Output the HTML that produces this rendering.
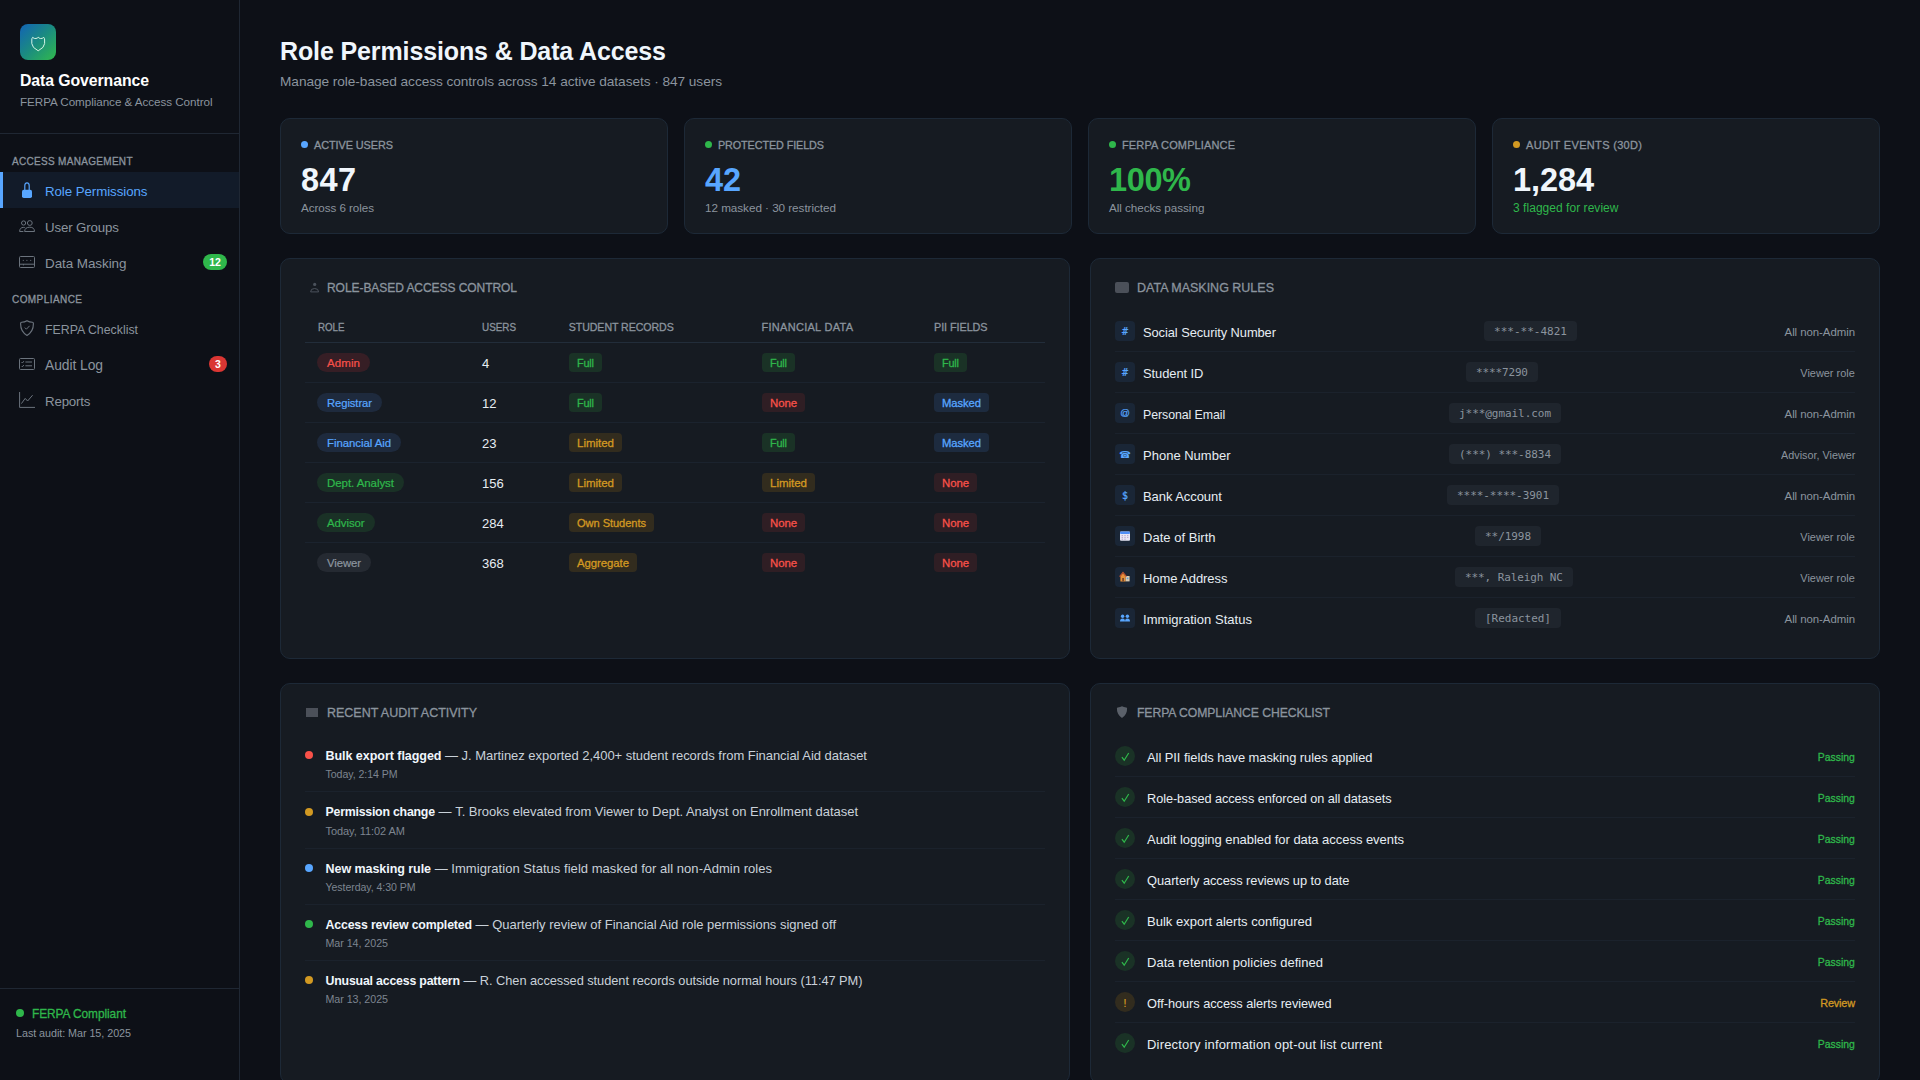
<!DOCTYPE html>
<html lang="en">
<head>
<meta charset="utf-8">
<title>Role Permissions &amp; Data Access</title>
<style>
*{box-sizing:border-box;margin:0;padding:0}
html,body{width:1920px;height:1080px;overflow:hidden;background:#0d1017}
body{font-family:"Liberation Sans",sans-serif;color:#e6edf3;position:relative}
.x{position:absolute;white-space:nowrap;line-height:1;display:block}
.b{font-weight:bold}
.sb{-webkit-text-stroke:.3px currentColor}
.md{-webkit-text-stroke:.12px currentColor}
.sb2{-webkit-text-stroke:.22px currentColor}
.mono{font-family:"DejaVu Sans Mono","Liberation Mono",monospace}
.nl{color:#8b949e}
.nv{color:#8b949e}
.pt{color:#8b949e}
i{position:absolute;display:block;font-style:normal}
.hr{left:0;width:239px;height:1px;background:#1f2733}
#sideline{left:239px;top:0;width:1px;height:1080px;background:#1f2733}
#logo{left:20px;top:24px;width:36px;height:36px;border-radius:8px;background:linear-gradient(135deg,#1263b6 0%,#1b8c80 50%,#31ba4c 100%)}
#logo svg{position:absolute;left:0;top:0}
#navon{left:0;top:172px;width:239px;height:36px;background:#121b29;border-left:3px solid #58a6ff}
.nbg{height:16px;border-radius:8px}
.card{background:#161b22;border:1px solid #1d2937;border-radius:10px}
.sd{width:7px;height:7px;border-radius:50%;top:141px}
.pill{height:19px;border-radius:10px}
.bg{height:19px;border-radius:4px}
.ln{height:1px;background:#1b232e}
.ln2{height:1px;background:#1b222c}
.ib{width:20px;height:20px;border-radius:4px;background:#1a2636}
.vb{height:20px;border-radius:4px;background:#1f252d}
.g{display:block;width:20px;height:20px;text-align:center;font:normal 10px/20px "DejaVu Sans Mono",monospace;color:#58a6ff}
.dot8{width:8px;height:8px;border-radius:50%}
.ck{width:20px;height:20px;border-radius:50%}
svg{display:block}
</style>
</head>
<body>
<aside>
<i id="sideline"></i>
<i id="logo"><svg width="36" height="36" viewBox="0 0 36 36" fill="none" stroke="#d6f5e6" stroke-width="1" stroke-linejoin="round"><path d="M12.6 13.4 Q14.2 14.8 16 14.5 Q17.4 14.2 18.2 13.3 Q19 14.2 20.4 14.5 Q22.2 14.8 23.8 13.4 Q24.8 14.6 24.6 16 V19.6 Q24.4 23.6 18.2 26.8 Q12 23.6 11.8 19.6 V16 Q11.6 14.6 12.6 13.4 Z"/></svg></i>
<span id="brand" class="x b" style="top:73.00px;font-size:15.84px;left:20.00px;letter-spacing:-0.086px;color:#fff;">Data Governance</span>
<span id="brandsub" class="x " style="top:96.00px;font-size:11.67px;left:20.00px;letter-spacing:-0.051px;color:#8b949e;">FERPA Compliance &amp; Access Control</span>
<i class="hr" style="top:133px"></i>
<span id="nl1" class="x sb nl" style="top:157.00px;font-size:10px;left:12.00px;letter-spacing:0.308px;">ACCESS MANAGEMENT</span>
<i id="navon"></i>
<i style="left:22px;top:182px"><svg width="10" height="16" viewBox="0 0 10 16" fill="#58a6ff"><path d="M2.8 8.4 V3.8 Q2.8 0.9 5 0.9 Q7.2 0.9 7.2 3.8 V8.4" fill="none" stroke="#58a6ff" stroke-width="1.2"/><rect x="0" y="7.8" width="10" height="8.2" rx="1.8"/></svg></i>
<i style="left:19px;top:220px"><svg width="16" height="12" viewBox="0 0 16 12" fill="none" stroke="#6b737d" stroke-width="1"><circle cx="4.6" cy="3" r="2.1"/><circle cx="10.8" cy="3" r="2.4"/><path d="M0.6 11.5 Q0.8 7.4 4.4 7.4 Q5.6 7.4 6.2 7.9 M0.6 11.5 H4.4 M5.6 11.5 Q5.8 7.2 10.8 7.2 Q15.4 7.2 15.5 11.5 Z"/></svg></i>
<i style="left:19px;top:256px"><svg width="16" height="12" viewBox="0 0 16 12" fill="none" stroke="#6b737d" stroke-width="1"><rect x="0.5" y="0.5" width="15" height="11" rx="1"/><path d="M0.5 8.2 H15.5 M4.4 8.2 V9.4"/><path d="M3.8 4.4h1M7.4 4.4h1M11.2 4.4h1" /></svg></i>
<i style="left:20px;top:320px"><svg width="14" height="16" viewBox="0 0 14 16" fill="none" stroke="#6b737d" stroke-width="1"><path d="M7 0.7 C5.4 1.7 3.4 2.2 1.6 2.2 Q0.6 2.3 0.6 3.4 C0.5 8.6 2.4 12.8 7 15.4 C11.6 12.8 13.5 8.6 13.4 3.4 Q13.4 2.3 12.4 2.2 C10.6 2.2 8.6 1.7 7 0.7Z" stroke-width="1.15"/><path d="M4.8 7.6 L6.4 9.2 L9.6 5.8"/></svg></i>
<i style="left:19px;top:358px"><svg width="16" height="12" viewBox="0 0 16 12" fill="none" stroke="#6b737d" stroke-width="1"><rect x="0.5" y="0.5" width="15" height="11" rx="1"/><path d="M6.4 4 H13 M6.4 7.8 H13 M2.6 4.2 L3.4 5 L4.8 3.2 M2.6 8 L3.4 8.8 L4.8 7"/></svg></i>
<i style="left:19px;top:392px"><svg width="16" height="16" viewBox="0 0 16 16" fill="none" stroke="#6b737d" stroke-width="1"><path d="M0.6 0 V15.4 H16 M2.4 11.6 L6.2 6.4 L8.6 9 L13.6 3.2"/></svg></i>
<span id="nv0" class="x nv" style="top:185.00px;font-size:13.31px;left:45.00px;letter-spacing:-0.065px;color:#58a6ff;">Role Permissions</span>
<span id="nv1" class="x nv" style="top:221.00px;font-size:13.3px;left:45.00px;letter-spacing:-0.138px;">User Groups</span>
<span id="nv2" class="x nv" style="top:257.00px;font-size:13.47px;left:45.00px;letter-spacing:-0.078px;">Data Masking</span>
<i class="nbg" style="left:203px;top:254px;width:24px;background:#2fb74b"></i><span id="bd12" class="x b" style="top:256.80px;font-size:10.5px;left:203.00px;color:#fff;width:24px;text-align:center;">12</span>
<span id="nl2" class="x sb nl" style="top:295.00px;font-size:10px;left:12.00px;letter-spacing:0.431px;">COMPLIANCE</span>
<span id="nv3" class="x nv" style="top:323.00px;font-size:13.3px;left:45.00px;transform:scaleX(0.9277);transform-origin:0 50%;">FERPA Checklist</span>
<span id="nv4" class="x nv" style="top:359.00px;font-size:13.86px;left:45.00px;letter-spacing:-0.072px;">Audit Log</span>
<span id="nv5" class="x nv" style="top:395.00px;font-size:13.3px;left:45.00px;letter-spacing:-0.177px;">Reports</span>
<i class="nbg" style="left:209px;top:356px;width:18px;background:#da3633"></i><span id="bd3" class="x b" style="top:358.80px;font-size:10.5px;left:209.00px;color:#fff;width:18px;text-align:center;">3</span>
<i class="hr" style="top:988px"></i>
<i class="dot8" style="left:16px;top:1009px;background:#2fb74b"></i>
<span id="fc" class="x sb" style="top:1009.00px;font-size:11.89px;left:32.00px;letter-spacing:-0.059px;color:#2fb74b;">FERPA Compliant</span>
<span id="la" class="x " style="top:1028.00px;font-size:10.77px;left:16.00px;letter-spacing:-0.048px;color:#8b949e;">Last audit: Mar 15, 2025</span>
</aside>
<main>
<header>
<span id="h1" class="x b" style="top:39.00px;font-size:25px;left:280.00px;letter-spacing:-0.122px;color:#f0f6fc;">Role Permissions &amp; Data Access</span>
<span id="h2" class="x " style="top:75.00px;font-size:13.68px;left:280.00px;letter-spacing:-0.058px;color:#8b949e;">Manage role-based access controls across 14 active datasets · 847 users</span>
</header>
<section id="stats">
<i class="card" style="left:280px;top:118px;width:388px;height:116px"></i><i class="sd" style="left:301px;background:#58a6ff"></i>
<i class="card" style="left:684px;top:118px;width:388px;height:116px"></i><i class="sd" style="left:705px;background:#2fb74b"></i>
<i class="card" style="left:1088px;top:118px;width:388px;height:116px"></i><i class="sd" style="left:1109px;background:#2fb74b"></i>
<i class="card" style="left:1492px;top:118px;width:388px;height:116px"></i><i class="sd" style="left:1513px;background:#d29922"></i>
<span id="sl0" class="x sb" style="top:140.00px;font-size:10.88px;left:314.00px;letter-spacing:-0.071px;color:#8b949e;">ACTIVE USERS</span>
<span id="sl1" class="x sb" style="top:140.00px;font-size:10.77px;left:718.00px;letter-spacing:-0.072px;color:#8b949e;">PROTECTED FIELDS</span>
<span id="sl2" class="x sb" style="top:140.00px;font-size:11px;left:1122.00px;letter-spacing:0.130px;color:#8b949e;">FERPA COMPLIANCE</span>
<span id="sl3" class="x sb" style="top:140.00px;font-size:11px;left:1526.00px;letter-spacing:0.327px;color:#8b949e;">AUDIT EVENTS (30D)</span>
<span id="sv0" class="x b" style="top:164.00px;font-size:32.5px;left:301.00px;letter-spacing:0.383px;color:#f0f6fc;">847</span>
<span id="sv1" class="x b" style="top:164.00px;font-size:32.5px;left:705.00px;letter-spacing:-0.156px;color:#58a6ff;">42</span>
<span id="sv2" class="x b" style="top:164.00px;font-size:32.5px;left:1109.00px;letter-spacing:-0.375px;color:#2fb74b;">100%</span>
<span id="sv3" class="x b" style="top:164.00px;font-size:32.5px;left:1513.00px;letter-spacing:-0.086px;color:#f0f6fc;">1,284</span>
<span id="ss0" class="x " style="top:202.00px;font-size:11.64px;left:301.00px;letter-spacing:-0.050px;color:#8b949e;">Across 6 roles</span>
<span id="ss1" class="x " style="top:202.00px;font-size:11.73px;left:705.00px;letter-spacing:-0.051px;color:#8b949e;">12 masked · 30 restricted</span>
<span id="ss2" class="x " style="top:202.00px;font-size:11.71px;left:1109.00px;letter-spacing:-0.052px;color:#8b949e;">All checks passing</span>
<span id="ss3" class="x " style="top:202.00px;font-size:12px;left:1513.00px;letter-spacing:0.040px;color:#2fb74b;">3 flagged for review</span>
</section>
<section id="rbac">
<i class="card" style="left:280px;top:258px;width:790px;height:401px;border-radius:10px"></i>
<i style="left:310px;top:282px"><svg width="10" height="11" viewBox="0 0 10 11" fill="none" stroke="#4b525c" stroke-width="1"><circle cx="4.7" cy="2.4" r="1.6" fill="#4b525c" stroke="none"/><path d="M0.6 9.9 Q0.6 6.5 4.6 6.5 Q8.6 6.5 8.6 9.9 Z"/></svg></i>
<span id="pt1" class="x sb pt" style="top:282.00px;font-size:12.03px;left:327.00px;letter-spacing:-0.068px;">ROLE-BASED ACCESS CONTROL</span>
<span id="th0" class="x sb" style="top:323.00px;font-size:10.45px;left:317.50px;transform:scaleX(0.9319);transform-origin:0 50%;color:#8b949e;">ROLE</span>
<span id="th1" class="x sb" style="top:323.00px;font-size:10.45px;left:482.00px;transform:scaleX(0.9453);transform-origin:0 50%;color:#8b949e;">USERS</span>
<span id="th2" class="x sb" style="top:322.00px;font-size:10.62px;left:568.75px;letter-spacing:-0.066px;color:#8b949e;">STUDENT RECORDS</span>
<span id="th3" class="x sb" style="top:322.00px;font-size:11px;left:761.50px;letter-spacing:0.284px;color:#8b949e;">FINANCIAL DATA</span>
<span id="th4" class="x sb" style="top:322.00px;font-size:10.82px;left:934.00px;letter-spacing:-0.055px;color:#8b949e;">PII FIELDS</span>
<i class="ln" style="left:305px;top:342px;width:740px;background:#222d3a"></i>
<i class="pill" style="left:317px;top:353px;width:53px;background:#361e25"></i>
<i class="bg" style="left:569px;top:353px;width:33px;background:#1a3226"></i>
<i class="bg" style="left:762px;top:353px;width:33px;background:#1a3226"></i>
<i class="bg" style="left:934px;top:353px;width:33px;background:#1a3226"></i>
<i class="ln" style="left:305px;top:382px;width:740px"></i>
<i class="pill" style="left:317px;top:393px;width:65px;background:#1e2a3d"></i>
<i class="bg" style="left:569px;top:393px;width:33px;background:#1a3226"></i>
<i class="bg" style="left:762px;top:393px;width:43px;background:#2f1e24"></i>
<i class="bg" style="left:934px;top:393px;width:55px;background:#1d2b3f"></i>
<i class="ln" style="left:305px;top:422px;width:740px"></i>
<i class="pill" style="left:317px;top:433px;width:84px;background:#1e2a3d"></i>
<i class="bg" style="left:569px;top:433px;width:53px;background:#322c1e"></i>
<i class="bg" style="left:762px;top:433px;width:33px;background:#1a3226"></i>
<i class="bg" style="left:934px;top:433px;width:55px;background:#1d2b3f"></i>
<i class="ln" style="left:305px;top:462px;width:740px"></i>
<i class="pill" style="left:317px;top:473px;width:87px;background:#1a3126"></i>
<i class="bg" style="left:569px;top:473px;width:53px;background:#322c1e"></i>
<i class="bg" style="left:762px;top:473px;width:53px;background:#322c1e"></i>
<i class="bg" style="left:934px;top:473px;width:43px;background:#2f1e24"></i>
<i class="ln" style="left:305px;top:502px;width:740px"></i>
<i class="pill" style="left:317px;top:513px;width:57.6px;background:#1a3126"></i>
<i class="bg" style="left:569px;top:513px;width:85px;background:#322c1e"></i>
<i class="bg" style="left:762px;top:513px;width:43px;background:#2f1e24"></i>
<i class="bg" style="left:934px;top:513px;width:43px;background:#2f1e24"></i>
<i class="ln" style="left:305px;top:542px;width:740px"></i>
<i class="pill" style="left:317px;top:553px;width:54px;background:#252a32"></i>
<i class="bg" style="left:569px;top:553px;width:68px;background:#322c1e"></i>
<i class="bg" style="left:762px;top:553px;width:43px;background:#2f1e24"></i>
<i class="bg" style="left:934px;top:553px;width:43px;background:#2f1e24"></i>
<span id="rp0" class="x sb2" style="top:358.00px;font-size:11.5px;left:327.00px;letter-spacing:0.098px;color:#f85149;">Admin</span>
<span id="rp1" class="x sb2" style="top:398.00px;font-size:11.2px;left:327.00px;letter-spacing:-0.049px;color:#58a6ff;">Registrar</span>
<span id="rp2" class="x sb2" style="top:438.00px;font-size:11.4px;left:327.00px;letter-spacing:-0.049px;color:#58a6ff;">Financial Aid</span>
<span id="rp3" class="x sb2" style="top:478.00px;font-size:11.5px;left:327.00px;letter-spacing:-0.064px;color:#2fb74b;">Dept. Analyst</span>
<span id="rp4" class="x sb2" style="top:518.00px;font-size:11.39px;left:327.00px;letter-spacing:-0.056px;color:#2fb74b;">Advisor</span>
<span id="rp5" class="x sb2" style="top:558.00px;font-size:11.3px;left:327.00px;letter-spacing:-0.066px;color:#8b949e;">Viewer</span>
<span id="ru0" class="x " style="top:357.00px;font-size:13px;left:482.00px;color:#e6edf3;">4</span>
<span id="ru1" class="x " style="top:397.00px;font-size:13px;left:482.00px;color:#e6edf3;">12</span>
<span id="ru2" class="x " style="top:437.00px;font-size:13px;left:482.00px;color:#e6edf3;">23</span>
<span id="ru3" class="x " style="top:477.00px;font-size:13px;left:482.00px;color:#e6edf3;">156</span>
<span id="ru4" class="x " style="top:517.00px;font-size:13px;left:482.00px;color:#e6edf3;">284</span>
<span id="ru5" class="x " style="top:557.00px;font-size:13px;left:482.00px;color:#e6edf3;">368</span>
<span id="rb00" class="x sb" style="top:358.00px;font-size:10.92px;left:577.00px;letter-spacing:-0.193px;color:#2fb74b;">Full</span>
<span id="rb01" class="x sb" style="top:358.00px;font-size:10.92px;left:770.00px;letter-spacing:-0.193px;color:#2fb74b;">Full</span>
<span id="rb02" class="x sb" style="top:358.00px;font-size:10.92px;left:942.00px;letter-spacing:-0.193px;color:#2fb74b;">Full</span>
<span id="rb10" class="x sb" style="top:398.00px;font-size:10.92px;left:577.00px;letter-spacing:-0.193px;color:#2fb74b;">Full</span>
<span id="rb11" class="x sb" style="top:398.00px;font-size:11.4px;left:770.00px;letter-spacing:-0.078px;color:#f85149;">None</span>
<span id="rb12" class="x sb" style="top:398.00px;font-size:11.25px;left:942.00px;letter-spacing:-0.081px;color:#58a6ff;">Masked</span>
<span id="rb20" class="x sb" style="top:438.00px;font-size:11.5px;left:577.00px;letter-spacing:-0.013px;color:#d29922;">Limited</span>
<span id="rb21" class="x sb" style="top:438.00px;font-size:10.92px;left:770.00px;letter-spacing:-0.193px;color:#2fb74b;">Full</span>
<span id="rb22" class="x sb" style="top:438.00px;font-size:11.25px;left:942.00px;letter-spacing:-0.081px;color:#58a6ff;">Masked</span>
<span id="rb30" class="x sb" style="top:478.00px;font-size:11.5px;left:577.00px;letter-spacing:-0.013px;color:#d29922;">Limited</span>
<span id="rb31" class="x sb" style="top:478.00px;font-size:11.5px;left:770.00px;letter-spacing:-0.013px;color:#d29922;">Limited</span>
<span id="rb32" class="x sb" style="top:478.00px;font-size:11.4px;left:942.00px;letter-spacing:-0.078px;color:#f85149;">None</span>
<span id="rb40" class="x sb" style="top:518.00px;font-size:11.1px;left:577.00px;letter-spacing:-0.062px;color:#d29922;">Own Students</span>
<span id="rb41" class="x sb" style="top:518.00px;font-size:11.4px;left:770.00px;letter-spacing:-0.078px;color:#f85149;">None</span>
<span id="rb42" class="x sb" style="top:518.00px;font-size:11.4px;left:942.00px;letter-spacing:-0.078px;color:#f85149;">None</span>
<span id="rb50" class="x sb" style="top:558.00px;font-size:11.38px;left:577.00px;letter-spacing:-0.062px;color:#d29922;">Aggregate</span>
<span id="rb51" class="x sb" style="top:558.00px;font-size:11.4px;left:770.00px;letter-spacing:-0.078px;color:#f85149;">None</span>
<span id="rb52" class="x sb" style="top:558.00px;font-size:11.4px;left:942.00px;letter-spacing:-0.078px;color:#f85149;">None</span>
</section>
<section id="masking">
<i class="card" style="left:1090px;top:258px;width:790px;height:401px;border-radius:10px"></i>
<i style="left:1115px;top:282px;width:14px;height:10.5px;border-radius:2px;background:#4b5059"></i>
<span id="pt2" class="x sb pt" style="top:282.00px;font-size:12.5px;left:1137.00px;letter-spacing:-0.005px;">DATA MASKING RULES</span>
<i class="ib" style="left:1115px;top:321px"><b class="g" style="line-height:22px;-webkit-text-stroke:.2px #58a6ff">#</b></i>
<i class="vb" style="left:1484px;top:321px;width:93px"></i>
<i class="ln2" style="left:1115px;top:351px;width:740px"></i>
<i class="ib" style="left:1115px;top:362px"><b class="g" style="line-height:22px;-webkit-text-stroke:.2px #58a6ff">#</b></i>
<i class="vb" style="left:1466px;top:362px;width:72px"></i>
<i class="ln2" style="left:1115px;top:392px;width:740px"></i>
<i class="ib" style="left:1115px;top:403px"><b class="g" style="font-family:'Liberation Sans',sans-serif;font-size:9.5px;line-height:20px;-webkit-text-stroke:.2px #58a6ff">@</b></i>
<i class="vb" style="left:1449px;top:403px;width:112px"></i>
<i class="ln2" style="left:1115px;top:433px;width:740px"></i>
<i class="ib" style="left:1115px;top:444px"><b class="g" style="font-family:'DejaVu Sans',sans-serif;font-size:9.5px;line-height:21px">☎</b></i>
<i class="vb" style="left:1449px;top:444px;width:112px"></i>
<i class="ln2" style="left:1115px;top:474px;width:740px"></i>
<i class="ib" style="left:1115px;top:485px"><b class="g" style="line-height:21px;-webkit-text-stroke:.25px #58a6ff">$</b></i>
<i class="vb" style="left:1447px;top:485px;width:112px"></i>
<i class="ln2" style="left:1115px;top:515px;width:740px"></i>
<i class="ib" style="left:1115px;top:526px"><svg width="20" height="20" viewBox="0 0 20 20"><rect x="5" y="5.4" width="10" height="9.4" rx="1" fill="#e8e6f5"/><rect x="5" y="5.4" width="10" height="2.6" rx="1" fill="#4f8ef7"/><path d="M6.6 9.6h1.4M9.3 9.6h1.4M12 9.6h1.4M6.6 11.4h1.4M9.3 11.4h1.4M12 11.4h1.4M6.6 13.2h1.4M9.3 13.2h1.4" stroke="#b9a8cf" stroke-width="1"/></svg></i>
<i class="vb" style="left:1475px;top:526px;width:66px"></i>
<i class="ln2" style="left:1115px;top:556px;width:740px"></i>
<i class="ib" style="left:1115px;top:567px"><svg width="20" height="20" viewBox="0 0 20 20"><path d="M5.4 14.4 V9.2 L8 6.2 L10.6 9.2 V14.4Z" fill="#e8913a"/><path d="M10.6 9 H14.6 V14.4 H10.6Z" fill="#d9c9b0"/><path d="M4.6 9.6 L8 5.4 L11.4 9.6" fill="none" stroke="#c0522e" stroke-width="1.2"/><rect x="7.2" y="11" width="1.8" height="3.4" fill="#7a4a2a"/><rect x="11.8" y="10.6" width="1.6" height="1.6" fill="#5aa0e0"/></svg></i>
<i class="vb" style="left:1455px;top:567px;width:118px"></i>
<i class="ln2" style="left:1115px;top:597px;width:740px"></i>
<i class="ib" style="left:1115px;top:608px"><svg width="20" height="20" viewBox="0 0 20 20" fill="#58a6ff"><circle cx="7.6" cy="8.2" r="1.7"/><circle cx="12.4" cy="8.2" r="1.7"/><path d="M5 13.4 Q5 10.4 7.6 10.4 Q10 10.4 10 13.4Z M10 13.4 Q10 10.4 12.4 10.4 Q15 10.4 15 13.4Z"/></svg></i>
<i class="vb" style="left:1475px;top:608px;width:86px"></i>
<span id="ml0" class="x " style="top:327.00px;font-size:12.86px;left:1143.00px;letter-spacing:-0.065px;color:#e6edf3;">Social Security Number</span>
<span id="ml1" class="x " style="top:368.00px;font-size:12.91px;left:1143.00px;letter-spacing:-0.065px;color:#e6edf3;">Student ID</span>
<span id="ml2" class="x " style="top:409.00px;font-size:12.35px;left:1143.00px;letter-spacing:-0.059px;color:#e6edf3;">Personal Email</span>
<span id="ml3" class="x " style="top:449.00px;font-size:13px;left:1143.00px;letter-spacing:0.004px;color:#e6edf3;">Phone Number</span>
<span id="ml4" class="x " style="top:490.00px;font-size:13px;left:1143.00px;letter-spacing:-0.068px;color:#e6edf3;">Bank Account</span>
<span id="ml5" class="x " style="top:531.00px;font-size:13px;left:1143.00px;letter-spacing:0.028px;color:#e6edf3;">Date of Birth</span>
<span id="ml6" class="x " style="top:572.00px;font-size:13px;left:1143.00px;letter-spacing:-0.079px;color:#e6edf3;">Home Address</span>
<span id="ml7" class="x " style="top:613.00px;font-size:13px;left:1143.00px;letter-spacing:0.037px;color:#e6edf3;">Immigration Status</span>
<span id="mv0" class="x mono" style="top:326.00px;font-size:11px;left:1494.00px;letter-spacing:0.014px;color:#8b949e;">***-**-4821</span>
<span id="mv1" class="x mono" style="top:367.00px;font-size:11px;left:1476.00px;letter-spacing:-0.141px;color:#8b949e;">****7290</span>
<span id="mv2" class="x mono" style="top:408.00px;font-size:11px;left:1459.00px;letter-spacing:-0.055px;color:#8b949e;">j***@gmail.com</span>
<span id="mv3" class="x mono" style="top:449.00px;font-size:11px;left:1459.00px;letter-spacing:-0.055px;color:#8b949e;">(***)&nbsp;***-8834</span>
<span id="mv4" class="x mono" style="top:490.00px;font-size:11px;left:1457.00px;letter-spacing:-0.055px;color:#8b949e;">****-****-3901</span>
<span id="mv5" class="x mono" style="top:531.00px;font-size:11px;left:1485.00px;letter-spacing:-0.060px;color:#8b949e;">**/1998</span>
<span id="mv6" class="x mono" style="top:572.00px;font-size:11px;left:1465.00px;letter-spacing:-0.096px;color:#8b949e;">***,&nbsp;Raleigh&nbsp;NC</span>
<span id="mv7" class="x mono" style="top:613.00px;font-size:11px;left:1485.00px;letter-spacing:-0.026px;color:#8b949e;">[Redacted]</span>
<span id="mr0" class="x " style="top:327.25px;font-size:11.44px;right:65.00px;letter-spacing:-0.059px;color:#8b949e;">All non-Admin</span>
<span id="mr1" class="x " style="top:368.25px;font-size:11.4px;right:65.00px;transform:scaleX(0.9598);transform-origin:100% 50%;color:#8b949e;">Viewer role</span>
<span id="mr2" class="x " style="top:409.25px;font-size:11.44px;right:65.00px;letter-spacing:-0.059px;color:#8b949e;">All non-Admin</span>
<span id="mr3" class="x " style="top:450.25px;font-size:11.4px;right:65.00px;transform:scaleX(0.9483);transform-origin:100% 50%;color:#8b949e;">Advisor, Viewer</span>
<span id="mr4" class="x " style="top:491.25px;font-size:11.44px;right:65.00px;letter-spacing:-0.059px;color:#8b949e;">All non-Admin</span>
<span id="mr5" class="x " style="top:532.25px;font-size:11.4px;right:65.00px;transform:scaleX(0.9598);transform-origin:100% 50%;color:#8b949e;">Viewer role</span>
<span id="mr6" class="x " style="top:573.25px;font-size:11.4px;right:65.00px;transform:scaleX(0.9598);transform-origin:100% 50%;color:#8b949e;">Viewer role</span>
<span id="mr7" class="x " style="top:614.25px;font-size:11.44px;right:65.00px;letter-spacing:-0.059px;color:#8b949e;">All non-Admin</span>
</section>
<section id="audit">
<i class="card" style="left:280px;top:683px;width:790px;height:401px;border-radius:10px"></i>
<i style="left:306px;top:708px;width:12px;height:9px;background:#4b5059"></i>
<span id="pt3" class="x sb pt" style="top:707.00px;font-size:12.5px;left:327.00px;letter-spacing:-0.013px;">RECENT AUDIT ACTIVITY</span>
<i class="dot8" style="left:305px;top:751px;background:#f85149"></i>
<i class="ln2" style="left:305px;top:791px;width:740px"></i>
<i class="dot8" style="left:305px;top:807.5px;background:#d29922"></i>
<i class="ln2" style="left:305px;top:848px;width:740px"></i>
<i class="dot8" style="left:305px;top:864px;background:#58a6ff"></i>
<i class="ln2" style="left:305px;top:904px;width:740px"></i>
<i class="dot8" style="left:305px;top:920px;background:#2fb74b"></i>
<i class="ln2" style="left:305px;top:960px;width:740px"></i>
<i class="dot8" style="left:305px;top:976px;background:#d29922"></i>
<span id="ab0" class="x b" style="top:750.00px;font-size:12.55px;left:325.50px;letter-spacing:-0.062px;color:#f0f6fc;">Bulk export flagged</span>
<span id="ab1" class="x b" style="top:806.00px;font-size:12.35px;left:325.50px;letter-spacing:-0.231px;color:#f0f6fc;">Permission change</span>
<span id="ab2" class="x b" style="top:863.00px;font-size:12.53px;left:325.50px;letter-spacing:-0.061px;color:#f0f6fc;">New masking rule</span>
<span id="ab3" class="x b" style="top:919.00px;font-size:12.35px;left:325.50px;letter-spacing:-0.171px;color:#f0f6fc;">Access review completed</span>
<span id="ab4" class="x b" style="top:975.00px;font-size:12.35px;left:325.50px;letter-spacing:-0.194px;color:#f0f6fc;">Unusual access pattern</span>
<span id="ar0" class="x " style="top:749.00px;font-size:13px;left:441.50px;letter-spacing:-0.037px;color:#c9d1d9;">&nbsp;—&nbsp;J. Martinez exported 2,400+ student records from Financial Aid dataset</span>
<span id="ar1" class="x " style="top:805.00px;font-size:13px;left:435.00px;letter-spacing:-0.023px;color:#c9d1d9;">&nbsp;—&nbsp;T. Brooks elevated from Viewer to Dept. Analyst on Enrollment dataset</span>
<span id="ar2" class="x " style="top:862.00px;font-size:13px;left:431.00px;letter-spacing:0.038px;color:#c9d1d9;">&nbsp;—&nbsp;Immigration Status field masked for all non-Admin roles</span>
<span id="ar3" class="x " style="top:918.00px;font-size:13px;left:472.00px;letter-spacing:-0.010px;color:#c9d1d9;">&nbsp;—&nbsp;Quarterly review of Financial Aid role permissions signed off</span>
<span id="ar4" class="x " style="top:975.00px;font-size:12.84px;left:460.00px;letter-spacing:-0.056px;color:#c9d1d9;">&nbsp;—&nbsp;R. Chen accessed student records outside normal hours (11:47 PM)</span>
<span id="at0" class="x " style="top:769.00px;font-size:10.58px;left:325.50px;letter-spacing:-0.055px;color:#7d8590;">Today, 2:14 PM</span>
<span id="at1" class="x " style="top:826.00px;font-size:11px;left:325.50px;letter-spacing:-0.058px;color:#7d8590;">Today, 11:02 AM</span>
<span id="at2" class="x " style="top:882.00px;font-size:10.55px;left:325.50px;letter-spacing:-0.051px;color:#7d8590;">Yesterday, 4:30 PM</span>
<span id="at3" class="x " style="top:938.00px;font-size:10.71px;left:325.50px;letter-spacing:-0.053px;color:#7d8590;">Mar 14, 2025</span>
<span id="at4" class="x " style="top:994.00px;font-size:10.71px;left:325.50px;letter-spacing:-0.053px;color:#7d8590;">Mar 13, 2025</span>
</section>
<section id="checklist">
<i class="card" style="left:1090px;top:683px;width:790px;height:401px;border-radius:10px"></i>
<i style="left:1116px;top:706px"><svg width="12" height="12" viewBox="0 0 12 12" fill="#5a6069"><path d="M6 0.3 C4.8 1 3.4 1.4 1.8 1.4 Q0.9 1.4 0.9 2.4 C0.8 6.2 2.4 9.6 6 11.9 C9.6 9.6 11.2 6.2 11.1 2.4 Q11.1 1.4 10.2 1.4 C8.6 1.4 7.2 1 6 0.3Z"/></svg></i>
<span id="pt4" class="x sb pt" style="top:707.00px;font-size:12.2px;left:1137.00px;letter-spacing:-0.073px;">FERPA COMPLIANCE CHECKLIST</span>
<i class="ck" style="left:1115px;top:746px;background:#1a3226"><svg width="20" height="20" viewBox="0 0 20 20" fill="none" stroke="#2fb74b" stroke-width="1.2"><path d="M6.9 11.2 L9.2 14.2 L13.7 7"/></svg></i>
<i class="ln2" style="left:1115px;top:776px;width:740px"></i>
<i class="ck" style="left:1115px;top:787px;background:#1a3226"><svg width="20" height="20" viewBox="0 0 20 20" fill="none" stroke="#2fb74b" stroke-width="1.2"><path d="M6.9 11.2 L9.2 14.2 L13.7 7"/></svg></i>
<i class="ln2" style="left:1115px;top:817px;width:740px"></i>
<i class="ck" style="left:1115px;top:828px;background:#1a3226"><svg width="20" height="20" viewBox="0 0 20 20" fill="none" stroke="#2fb74b" stroke-width="1.2"><path d="M6.9 11.2 L9.2 14.2 L13.7 7"/></svg></i>
<i class="ln2" style="left:1115px;top:858px;width:740px"></i>
<i class="ck" style="left:1115px;top:869px;background:#1a3226"><svg width="20" height="20" viewBox="0 0 20 20" fill="none" stroke="#2fb74b" stroke-width="1.2"><path d="M6.9 11.2 L9.2 14.2 L13.7 7"/></svg></i>
<i class="ln2" style="left:1115px;top:899px;width:740px"></i>
<i class="ck" style="left:1115px;top:910px;background:#1a3226"><svg width="20" height="20" viewBox="0 0 20 20" fill="none" stroke="#2fb74b" stroke-width="1.2"><path d="M6.9 11.2 L9.2 14.2 L13.7 7"/></svg></i>
<i class="ln2" style="left:1115px;top:940px;width:740px"></i>
<i class="ck" style="left:1115px;top:951px;background:#1a3226"><svg width="20" height="20" viewBox="0 0 20 20" fill="none" stroke="#2fb74b" stroke-width="1.2"><path d="M6.9 11.2 L9.2 14.2 L13.7 7"/></svg></i>
<i class="ln2" style="left:1115px;top:981px;width:740px"></i>
<i class="ck" style="left:1115px;top:992px;background:#322c1e"></i>
<i class="ln2" style="left:1115px;top:1022px;width:740px"></i>
<i class="ck" style="left:1115px;top:1033px;background:#1a3226"><svg width="20" height="20" viewBox="0 0 20 20" fill="none" stroke="#2fb74b" stroke-width="1.2"><path d="M6.9 11.2 L9.2 14.2 L13.7 7"/></svg></i>
<span id="ct0" class="x " style="top:752.00px;font-size:12.93px;left:1147.00px;letter-spacing:-0.055px;color:#e6edf3;">All PII fields have masking rules applied</span>
<span id="ct1" class="x " style="top:793.00px;font-size:12.73px;left:1147.00px;letter-spacing:-0.055px;color:#e6edf3;">Role-based access enforced on all datasets</span>
<span id="ct2" class="x " style="top:833.00px;font-size:13px;left:1147.00px;letter-spacing:-0.040px;color:#e6edf3;">Audit logging enabled for data access events</span>
<span id="ct3" class="x " style="top:875.00px;font-size:12.87px;left:1147.00px;letter-spacing:-0.057px;color:#e6edf3;">Quarterly access reviews up to date</span>
<span id="ct4" class="x " style="top:915.00px;font-size:13px;left:1147.00px;letter-spacing:0.008px;color:#e6edf3;">Bulk export alerts configured</span>
<span id="ct5" class="x " style="top:956.00px;font-size:13px;left:1147.00px;letter-spacing:0.037px;color:#e6edf3;">Data retention policies defined</span>
<span id="ct6" class="x " style="top:998.00px;font-size:12.81px;left:1147.00px;letter-spacing:-0.052px;color:#e6edf3;">Off-hours access alerts reviewed</span>
<span id="ct7" class="x " style="top:1038.00px;font-size:13px;left:1147.00px;letter-spacing:0.181px;color:#e6edf3;">Directory information opt-out list current</span>
<span id="cs0" class="x sb" style="top:752.00px;font-size:10.92px;right:65.00px;transform:scaleX(0.9533);transform-origin:100% 50%;color:#2fb74b;">Passing</span>
<span id="cs1" class="x sb" style="top:793.00px;font-size:10.92px;right:65.00px;transform:scaleX(0.9533);transform-origin:100% 50%;color:#2fb74b;">Passing</span>
<span id="cs2" class="x sb" style="top:834.00px;font-size:10.92px;right:65.00px;transform:scaleX(0.9533);transform-origin:100% 50%;color:#2fb74b;">Passing</span>
<span id="cs3" class="x sb" style="top:875.00px;font-size:10.92px;right:65.00px;transform:scaleX(0.9533);transform-origin:100% 50%;color:#2fb74b;">Passing</span>
<span id="cs4" class="x sb" style="top:916.00px;font-size:10.92px;right:65.00px;transform:scaleX(0.9533);transform-origin:100% 50%;color:#2fb74b;">Passing</span>
<span id="cs5" class="x sb" style="top:957.00px;font-size:10.92px;right:65.00px;transform:scaleX(0.9533);transform-origin:100% 50%;color:#2fb74b;">Passing</span>
<span id="cs6" class="x sb" style="top:998.00px;font-size:10.92px;right:65.00px;letter-spacing:-0.153px;color:#d29922;">Review</span>
<span id="cs7" class="x sb" style="top:1039.00px;font-size:10.92px;right:65.00px;transform:scaleX(0.9533);transform-origin:100% 50%;color:#2fb74b;">Passing</span>
<span id="cx" class="x sb2" style="top:997.60px;font-size:10.5px;left:1115.00px;color:#d29922;width:20px;text-align:center;">!</span>
</section>
</main>
</body>
</html>
